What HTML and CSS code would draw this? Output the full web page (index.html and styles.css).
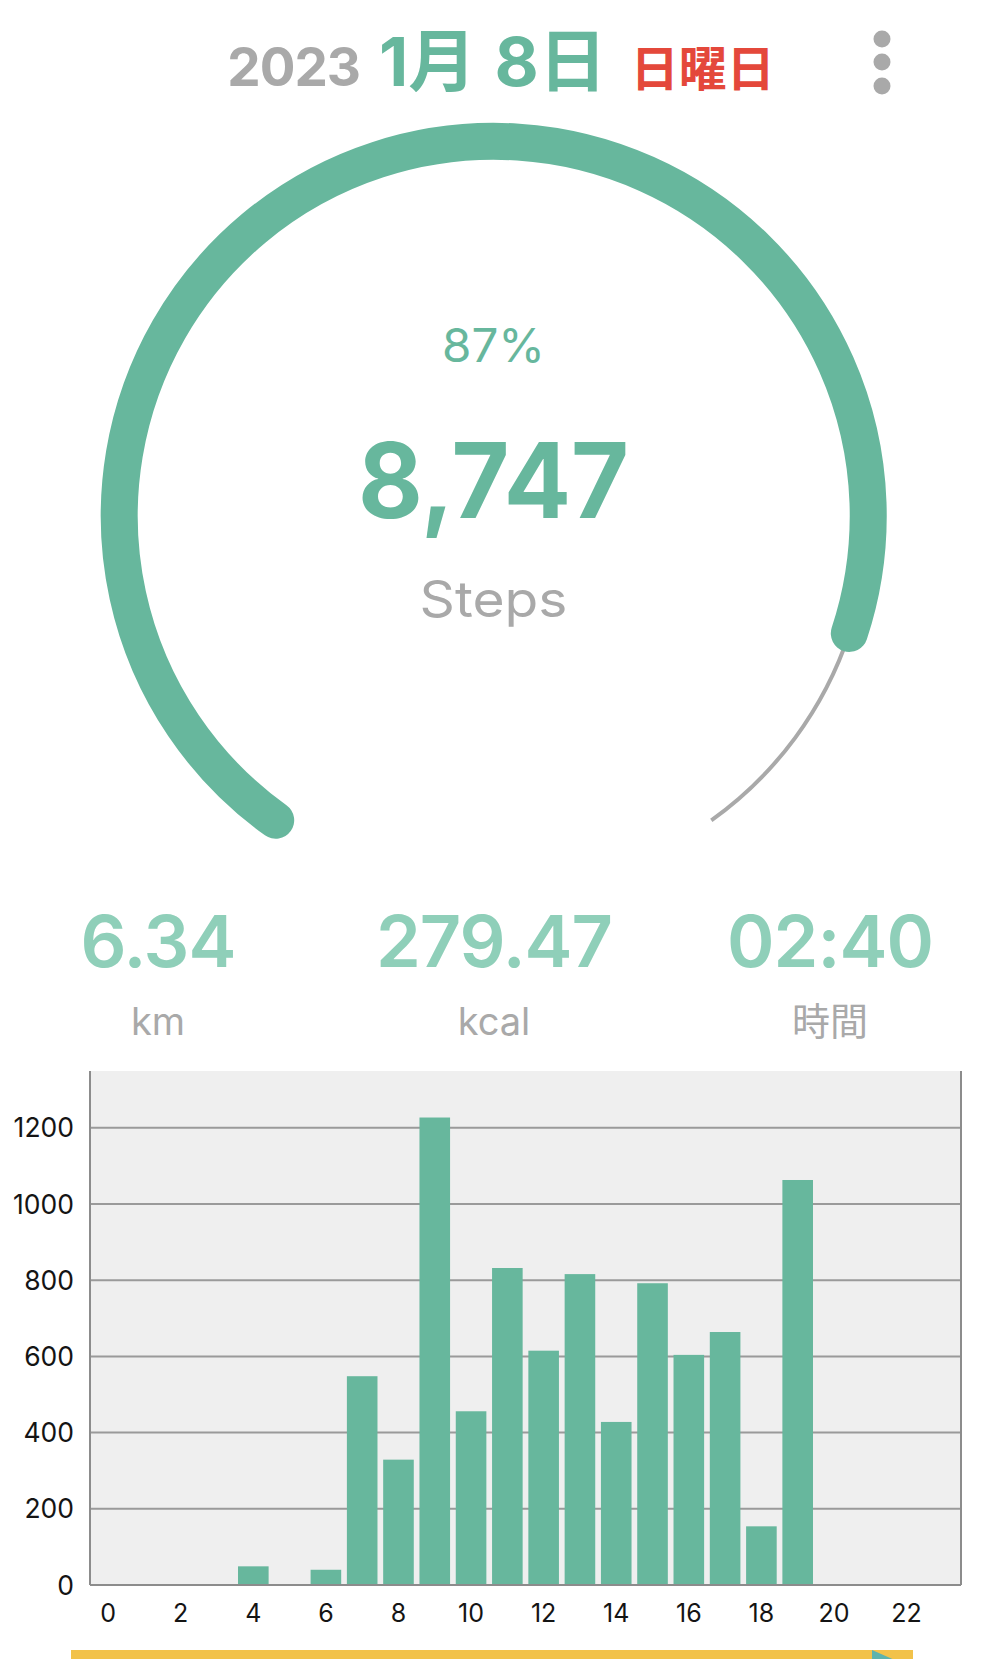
FILE: index.html
```html
<!DOCTYPE html>
<html lang="ja">
<head>
    <meta charset="UTF-8">
    <meta name="viewport" content="width=device-width, initial-scale=1.0">
    <title>歩数</title>
    <link rel="stylesheet" href="styles.css">
</head>
<body>
    <div class="page">
        <header class="date-bar">
            <div class="date">
                <span class="year">2023</span>
                <span class="day">1月</span>
                <span class="day">8日</span>
                <span class="weekday">日曜日</span>
            </div>
            <button class="menu" aria-label="menu">
                <svg width="18" height="66" viewBox="0 0 18 66">
                    <circle cx="9" cy="9" r="8.5"/>
                    <circle cx="9" cy="32" r="8.5"/>
                    <circle cx="9" cy="56" r="8.5"/>
                </svg>
            </button>
        </header>

        <section class="gauge">
            <svg width="988" height="750" viewBox="0 0 988 750">
                <path class="gauge-rest" d="M 849.3 523.4 A 374.5 374.5 0 0 1 711.3 710.3"/>
                <path class="gauge-fill" d="M 275.7 710.3 A 374.5 374.5 0 1 1 849.3 523.4"/>
                <text class="gauge-pct" x="493.5" y="252" textLength="103" lengthAdjust="spacingAndGlyphs">87%</text>
                <text class="gauge-steps" x="493.5" y="408" textLength="271" lengthAdjust="spacingAndGlyphs">8,747</text>
                <text class="gauge-unit" x="493.5" y="507" textLength="148" lengthAdjust="spacingAndGlyphs">Steps</text>
            </svg>
        </section>

        <section class="stats">
            <div class="stat">
                <div class="stat-value">6.34</div>
                <div class="stat-label">km</div>
            </div>
            <div class="stat">
                <div class="stat-value">279.47</div>
                <div class="stat-label">kcal</div>
            </div>
            <div class="stat">
                <div class="stat-value">02:40</div>
                <div class="stat-label">時間</div>
            </div>
        </section>

        <section class="chart">
            <svg id="hourChart" width="988" height="588" viewBox="0 0 988 588"></svg>
        </section>

        <div class="ad-bar">
            <svg class="ad-icon" width="40" height="30" viewBox="0 0 40 30">
                <polygon points="0,0 0,30 34,15"/>
            </svg>
        </div>
    </div>

    <script>
        // steps per hour, 0..23
        const hourly = [0, 0, 0, 0, 49, 0, 40, 548, 329, 1227, 456, 832, 615, 816, 428, 792, 604, 664, 154, 1063, 0, 0, 0, 0];

        function drawChart() {
            const svg = document.getElementById('hourChart');
            const left = 90, right = 961, top = 11, zero = 525;
            const band = (right - left) / 24;
            const barW = 30.6;
            const perUnit = 76.2 / 200;
            let out = '';

            out += `<rect class="plot-bg" x="${left}" y="${top}" width="${right - left}" height="${zero - top}"/>`;

            for (let v = 200; v <= 1200; v += 200) {
                const y = zero - v * perUnit;
                out += `<line class="grid" x1="${left}" y1="${y}" x2="${right}" y2="${y}"/>`;
            }
            for (let v = 0; v <= 1200; v += 200) {
                const y = zero - v * perUnit;
                out += `<text class="y-label" x="74" y="${y + 9.5}">${v}</text>`;
            }

            hourly.forEach((val, h) => {
                if (val > 0) {
                    const hgt = val * perUnit;
                    const x = left + band * h + (band - barW) / 2;
                    out += `<rect class="bar" x="${x}" y="${zero - hgt}" width="${barW}" height="${hgt}"/>`;
                }
                if (h % 2 === 0) {
                    out += `<text class="x-label" x="${left + band * (h + 0.5)}" y="562">${h}</text>`;
                }
            });

            out += `<line class="axis" x1="${left}" y1="${top}" x2="${left}" y2="${zero}"/>`;
            out += `<line class="axis" x1="${right}" y1="${top}" x2="${right}" y2="${zero}"/>`;
            out += `<line class="axis" x1="${left}" y1="${zero}" x2="${right}" y2="${zero}"/>`;

            svg.innerHTML = out;
        }

        document.addEventListener("DOMContentLoaded", drawChart);
    </script>
</body>
</html>
```

FILE: styles.css
```css
body {
    margin: 0;
    background-color: #ffffff;
    font-family: Inter, "Noto Sans CJK JP", sans-serif;
}
.page {
    width: 988px;
    overflow: hidden;
}

/* header */
.date-bar {
    position: relative;
    height: 110px;
}
.date {
    display: flex;
    align-items: baseline;
    justify-content: center;
    padding-top: 26px;
    padding-left: 14px;
    line-height: 70px;
    font-weight: 700;
}
.year {
    font-size: 53px;
    letter-spacing: -1px;
    color: #a9a9a9;
    margin-right: 19px;
}
.day {
    font-size: 68px;
    color: #67b79d;
    margin-right: 18px;
}
.day + .day {
    margin-right: 24px;
}
.weekday {
    font-size: 48px;
    color: #e4483b;
}
.menu {
    position: absolute;
    left: 873px;
    top: 30px;
    padding: 0;
    border: none;
    background: none;
    fill: #a9a9a9;
}
.menu svg {
    display: block;
}

/* gauge */
.gauge svg {
    display: block;
}
.gauge-fill {
    fill: none;
    stroke: #67b79d;
    stroke-width: 37;
    stroke-linecap: round;
}
.gauge-rest {
    fill: none;
    stroke: #a9a9a9;
    stroke-width: 4;
}
.gauge svg text {
    text-anchor: middle;
    font-family: Inter, sans-serif;
}
.gauge-pct {
    font-size: 46px;
    fill: #67b79d;
}
.gauge-steps {
    font-size: 104px;
    font-weight: 700;
    fill: #67b79d;
}
.gauge-unit {
    font-size: 50px;
    fill: #a9a9a9;
}

/* stats */
.stats {
    display: grid;
    grid-template-columns: repeat(3, 336px);
    justify-content: center;
    height: 200px;
    box-sizing: border-box;
    padding-top: 41px;
}
.stat {
    text-align: center;
}
.stat-value {
    font-size: 72px;
    line-height: 80px;
    font-weight: 600;
    letter-spacing: -1px;
    color: #8fcfb9;
}
.stat-label {
    margin-top: 15px;
    font-size: 38px;
    line-height: 50px;
    color: #a9a9a9;
}

/* chart */
.chart svg {
    display: block;
}
.plot-bg {
    fill: #efefef;
}
.grid {
    stroke: #9a9a9a;
    stroke-width: 2;
}
.axis {
    stroke: #8c8c8c;
    stroke-width: 2;
}
.bar {
    fill: #67b79d;
}
.y-label, .x-label {
    font-family: Inter, sans-serif;
    fill: #141414;
}
.y-label {
    font-size: 26.5px;
    text-anchor: end;
}
.x-label {
    font-size: 25px;
    text-anchor: middle;
}

/* ad strip */
.ad-bar {
    position: relative;
    margin-top: 2px;
    margin-left: 71px;
    width: 842px;
    height: 40px;
    background-color: #f2c24a;
}
.ad-icon {
    position: absolute;
    left: 801px;
    top: 0;
    fill: #5db3ad;
}
```
